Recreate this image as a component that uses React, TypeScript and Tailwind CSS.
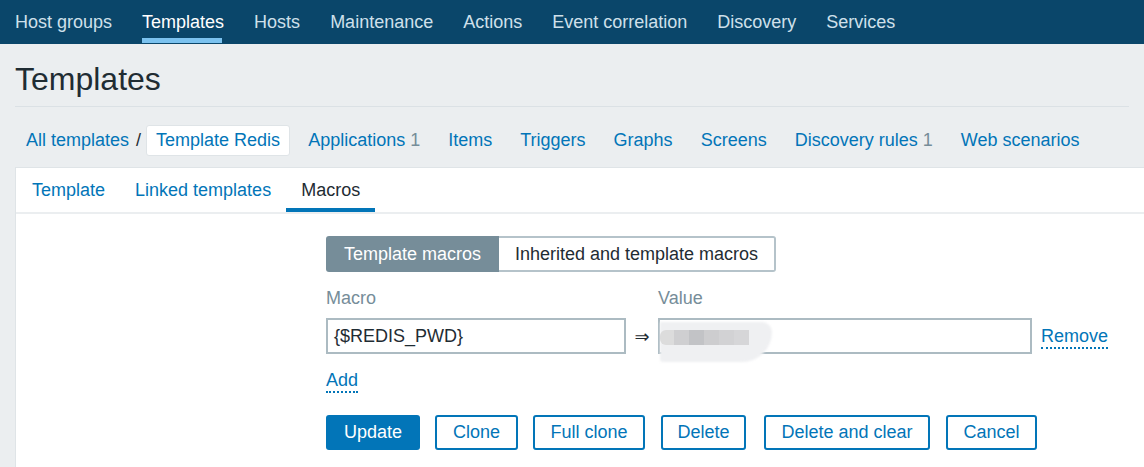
import React from "react";

const navItems = [
  "Host groups",
  "Templates",
  "Hosts",
  "Maintenance",
  "Actions",
  "Event correlation",
  "Discovery",
  "Services",
];

const crumbs: { label: string; count?: string }[] = [
  { label: "Applications", count: "1" },
  { label: "Items" },
  { label: "Triggers" },
  { label: "Graphs" },
  { label: "Screens" },
  { label: "Discovery rules", count: "1" },
  { label: "Web scenarios" },
];

const tabs = ["Template", "Linked templates", "Macros"];

export default function App() {
  return (
    <div className="w-[1144px] h-[467px] overflow-hidden bg-[#ebeef0] font-['Liberation_Sans',Arial,sans-serif] text-[18px] text-[#1f2c33]">
      {/* Top navigation */}
      <nav className="h-[44px] bg-[#0a466a] flex pl-[15px] gap-[30px]">
        {navItems.map((item) => {
          const active = item === "Templates";
          return (
            <a
              key={item}
              className={
                "relative flex items-center h-full whitespace-nowrap " +
                (active ? "text-white" : "text-[#cfe0eb]")
              }
            >
              {item}
              {active && (
                <span className="absolute left-0 right-[2px] bottom-[1px] h-[5px] bg-[#7bc2ef]" />
              )}
            </a>
          );
        })}
      </nav>

      {/* Header */}
      <div className="mx-[15px] h-[63px] pt-[8px] flex items-center border-b border-[#dbe1e5]">
        <h1 className="text-[32px] leading-none text-[#1f2c33]">Templates</h1>
      </div>

      {/* Breadcrumbs */}
      <div className="h-[60px] pt-[7px] pl-[26px] flex items-center whitespace-nowrap">
        <a className="text-[#0275b8]">All templates</a>
        <span className="ml-[7px] mr-[5px] text-[#1f2c33]">/</span>
        <span className="h-[31px] px-[9px] flex items-center bg-white border border-[#dfe4e7] rounded-[3px] text-[#0275b8]">
          Template Redis
        </span>
        <div className="flex ml-[18px] gap-[28px]">
          {crumbs.map((c) => (
            <a key={c.label} className="text-[#0275b8]">
              {c.label}
              {c.count && <span className="text-[#768d99]"> {c.count}</span>}
            </a>
          ))}
        </div>
      </div>

      {/* Panel */}
      <div className="ml-[15px] w-[1160px] h-[320px] bg-white border border-[#dfe4e7]">
        <div className="h-[44px] flex pl-[1px]">
          {tabs.map((t) => {
            const active = t === "Macros";
            return (
              <a
                key={t}
                className={
                  "relative h-full px-[15px] flex items-center whitespace-nowrap " +
                  (active ? "text-[#1f2c33]" : "text-[#0275b8]")
                }
              >
                {t}
                {active && (
                  <span className="absolute left-0 right-0 bottom-0 h-[4px] bg-[#0275b8]" />
                )}
              </a>
            );
          })}
        </div>
        <div className="h-[2px] bg-[#ebeef0]" />

        {/* Form */}
        <div className="pl-[310px] pt-[22px]">
          {/* Segmented control */}
          <div className="flex h-[36px]">
            <span className="w-[173px] h-full flex items-center justify-center bg-[#768d99] text-white rounded-l-[3px]">
              Template macros
            </span>
            <span className="w-[277px] h-full flex items-center justify-center bg-white border-2 border-l-0 border-[#b5c3ca] rounded-r-[3px] text-[#1f2c33]">
              Inherited and template macros
            </span>
          </div>

          {/* Labels */}
          <div className="mt-[14px] h-[24px] flex items-center text-[#768d99]">
            <span className="w-[332px]">Macro</span>
            <span>Value</span>
          </div>

          {/* Inputs row */}
          <div className="mt-[8px] flex items-center h-[36px]">
            <div className="w-[300px] h-[36px] border-2 border-[#acbbc2] bg-white pl-[6px] flex items-center text-[#1f2c33]">
              {"{$REDIS_PWD}"}
            </div>
            <span className="w-[32px] text-center font-['DejaVu_Sans',sans-serif] text-[18px] text-[#1f2c33]">
              ⇒
            </span>
            <div className="relative w-[374px] h-[36px] border-2 border-[#acbbc2] bg-white">
              <div className="absolute left-0 top-[2px] w-[112px] h-[40px] bg-[#eff0f2] rounded-tr-[20px] rounded-br-[60px] rounded-bl-[6px] blur-[1px]" />
              <div className="absolute left-[0px] top-[10px] flex h-[15px]">
                <span className="w-[14px] h-full bg-[#dcdcdc] rounded-l-[6px]" />
                <span className="w-[15px] h-full bg-[#cfcfd1]" />
                <span className="w-[15px] h-full bg-[#c2c3c6]" />
                <span className="w-[15px] h-full bg-[#cdcdcf]" />
                <span className="w-[15px] h-full bg-[#d2d2d4]" />
                <span className="w-[15px] h-full bg-[#d6d6d8]" />
              </div>
            </div>
            <a className="ml-[9px] text-[#0275b8] border-b-2 border-dotted border-[#0275b8] leading-[21px] mt-[2px]">
              Remove
            </a>
          </div>

          {/* Add */}
          <div className="mt-[16px] flex">
            <a className="text-[#0275b8] border-b-2 border-dotted border-[#0275b8] leading-[21px]">
              Add
            </a>
          </div>

          {/* Buttons */}
          <div className="mt-[22px] flex h-[35px]">
            <button className="w-[94px] h-full rounded-[3px] bg-[#0275b8] text-white">
              Update
            </button>
            <button className="ml-[15px] w-[83px] h-full rounded-[3px] border-2 border-[#0275b8] bg-white text-[#0275b8]">
              Clone
            </button>
            <button className="ml-[15px] w-[112px] h-full rounded-[3px] border-2 border-[#0275b8] bg-white text-[#0275b8]">
              Full clone
            </button>
            <button className="ml-[16px] w-[85px] h-full rounded-[3px] border-2 border-[#0275b8] bg-white text-[#0275b8]">
              Delete
            </button>
            <button className="ml-[18px] w-[166px] h-full rounded-[3px] border-2 border-[#0275b8] bg-white text-[#0275b8]">
              Delete and clear
            </button>
            <button className="ml-[16px] w-[91px] h-full rounded-[3px] border-2 border-[#0275b8] bg-white text-[#0275b8]">
              Cancel
            </button>
          </div>
        </div>
      </div>
    </div>
  );
}
